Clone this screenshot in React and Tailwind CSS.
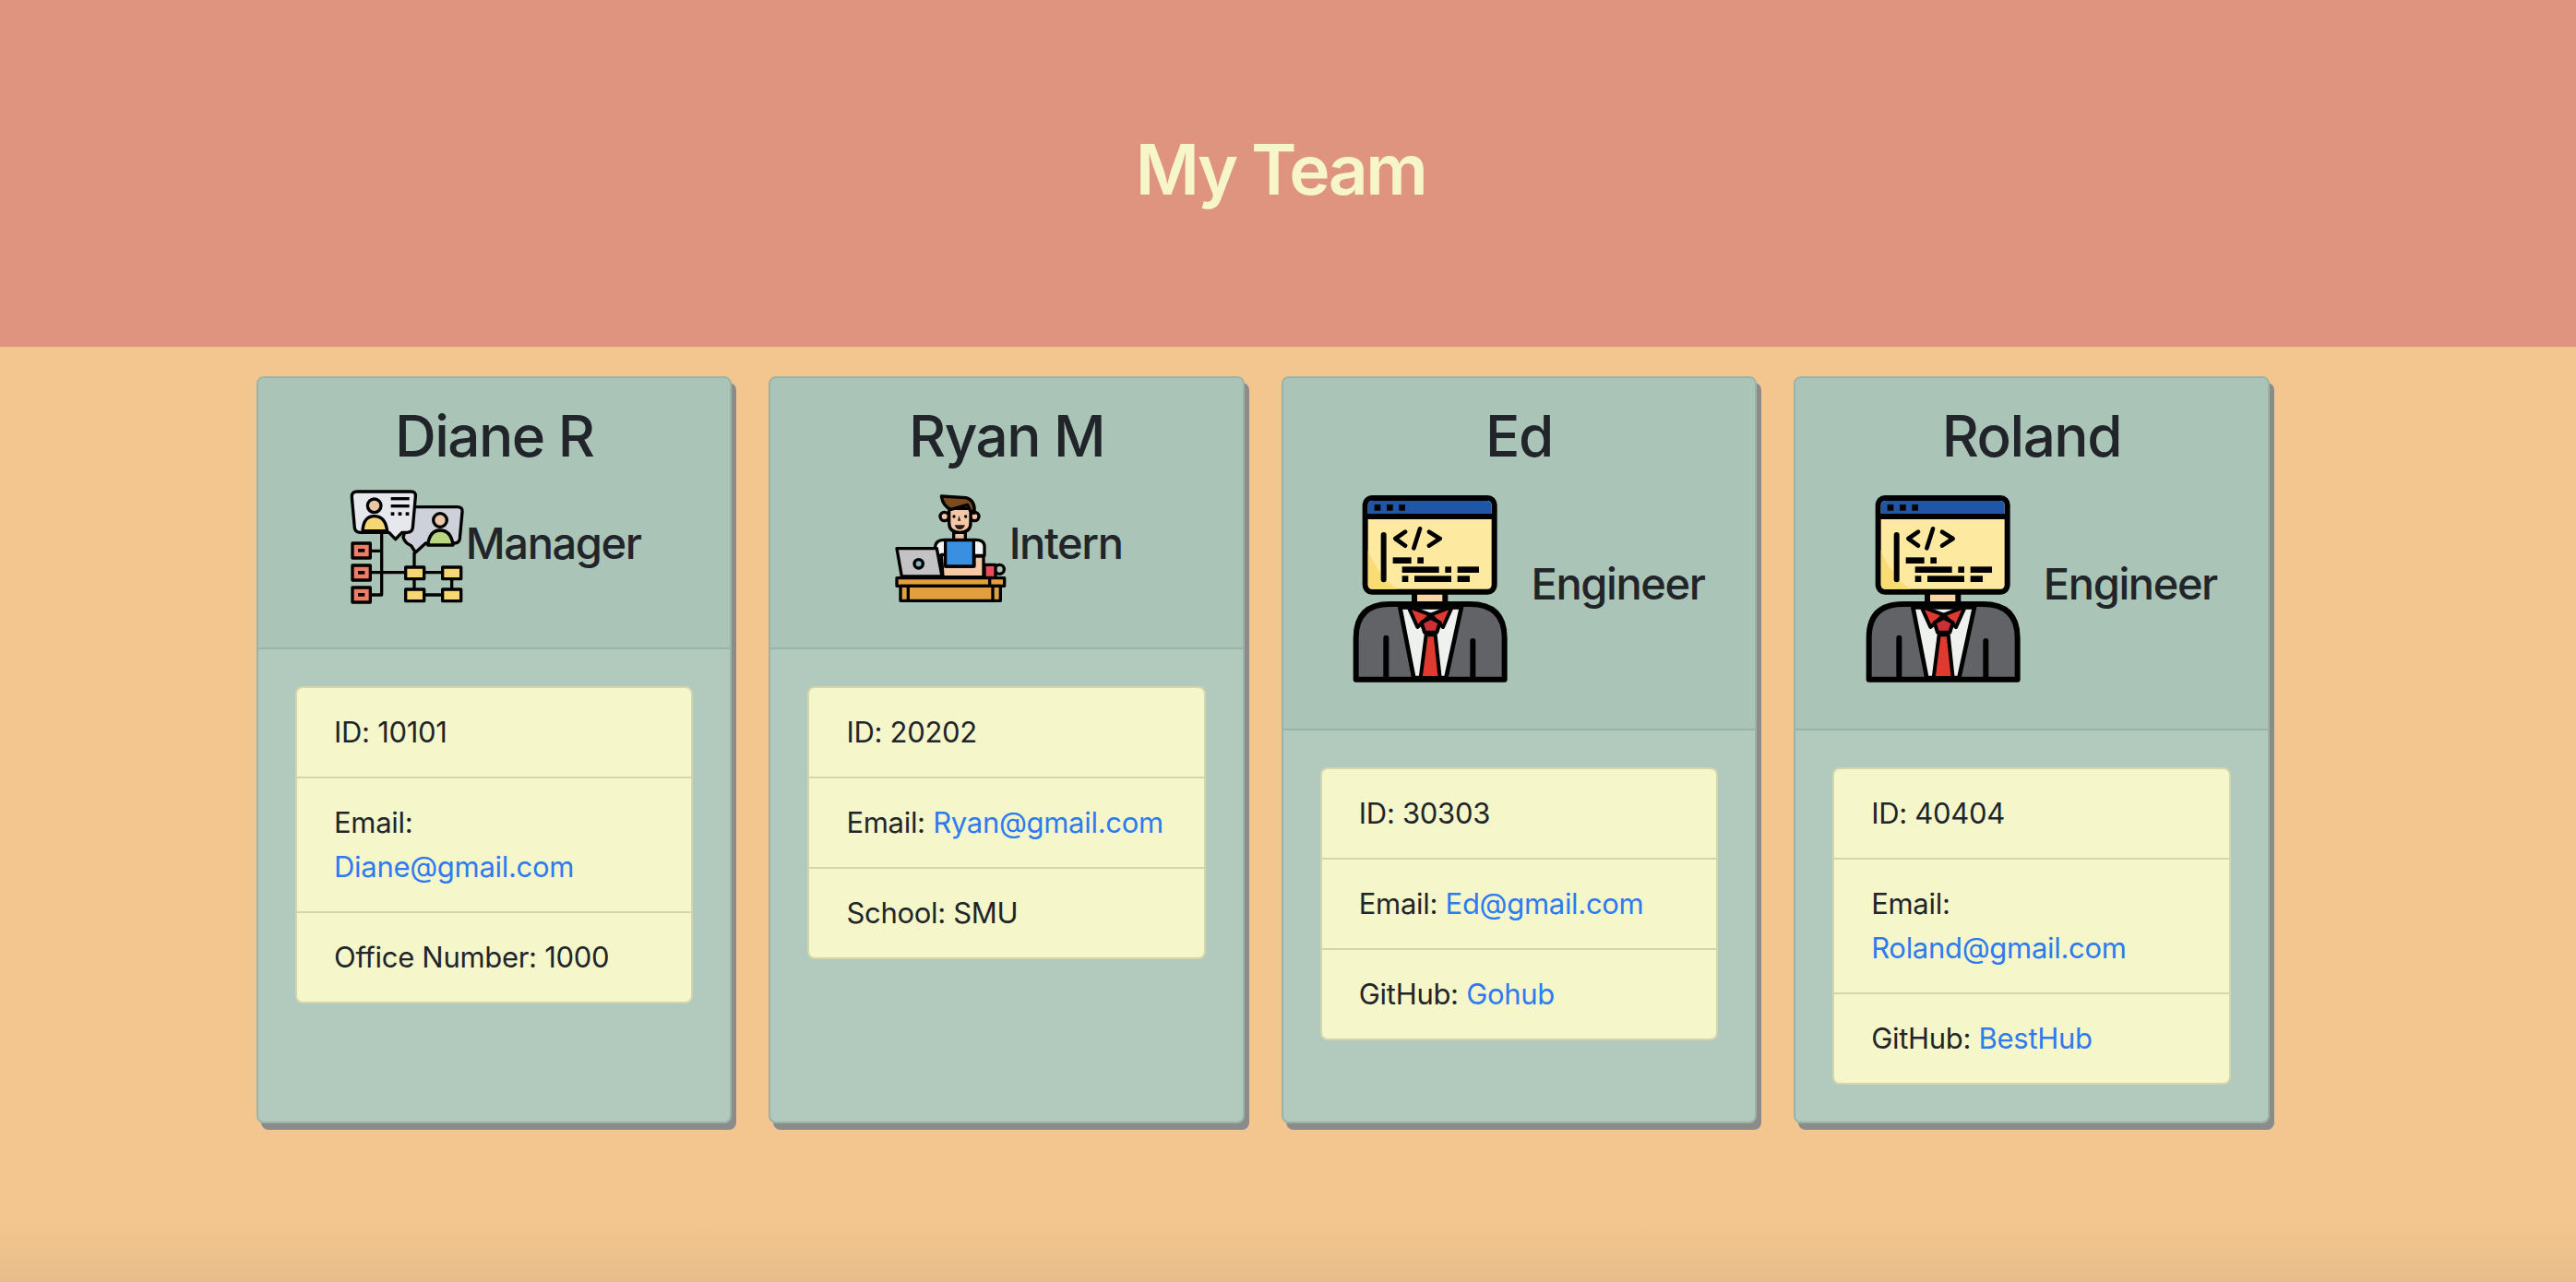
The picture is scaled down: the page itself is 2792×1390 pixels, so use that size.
const managerIcon = (
  <svg viewBox="112 24 384 384" className="w-[128px] h-[128px] shrink-0">
    <g stroke="#000" strokeWidth="10" strokeLinejoin="round" fill="none">
      <path d="M222 175V378H190M190 235H222M190 305H300M328 240V360M360 305H420M450 326V360M360 378H420" />
      <path d="M325 92H468Q486 92 484 108L476 195Q474 210 458 210H365L332 240L318 218Q296 208 292 190Z" fill="#cdd1da" />
      <path d="M142 42H318Q334 42 332 58L323 160Q321 175 305 175H288L267 197L246 175H152Q136 175 134 160L125 60Q124 42 142 42Z" fill="#e6e8ee" />
      <circle cx="198" cy="88" r="22" fill="#eac7a5" />
      <path d="M160 170Q163 122 198 122Q234 122 240 170Z" fill="#f7d676" />
      <circle cx="412" cy="135" r="22" fill="#eac7a5" />
      <path d="M372 216Q378 168 412 168Q448 168 454 216Z" fill="#b7d67f" />
      <rect x="127" y="210" width="58" height="48" fill="#ee7d67" />
      <rect x="127" y="282" width="58" height="48" fill="#ee7d67" />
      <rect x="127" y="354" width="58" height="48" fill="#ee7d67" />
      <rect x="300" y="288" width="60" height="38" fill="#f7d676" />
      <rect x="420" y="288" width="60" height="38" fill="#f7d676" />
      <rect x="300" y="360" width="60" height="38" fill="#f7d676" />
      <rect x="420" y="360" width="60" height="38" fill="#f7d676" />
    </g>
    <g fill="#000">
      <rect x="252" y="60" width="60" height="10" />
      <rect x="252" y="84" width="60" height="10" />
      <rect x="252" y="109" width="11" height="11" />
      <rect x="276" y="109" width="11" height="11" />
      <rect x="300" y="109" width="11" height="11" />
      <rect x="145" y="228" width="22" height="11" />
      <rect x="145" y="300" width="22" height="11" />
      <rect x="145" y="372" width="22" height="11" />
    </g>
  </svg>
);

const internIcon = (
  <svg viewBox="42 9 384 384" className="w-[128px] h-[128px] shrink-0">
    <g stroke="#000" strokeWidth="10" strokeLinejoin="round" fill="none">
      <circle cx="215" cy="108" r="14" fill="#f2c29c" />
      <circle cx="313" cy="108" r="14" fill="#f2c29c" />
      <rect x="245" y="160" width="38" height="28" fill="#f2c29c" />
      <path d="M230 82H300V130Q300 160 265 160Q230 160 230 130Z" fill="#f5c8a5" />
      <path d="M205 42L285 47Q316 55 312 97L298 88L290 70L236 85Q210 75 205 42Z" fill="#7b4a1e" />
      <path d="M185 235V205Q188 184 215 184H315Q345 184 345 205V235Z" fill="#f4f4f4" />
      <path d="M205 232H218V270H312V237H342V305H210Z" fill="#f6c9a6" />
      <rect x="218" y="185" width="92" height="85" fill="#3b8fe0" />
      <path d="M60 212H190L207 303H76Z" fill="#c3c3c5" />
      <circle cx="131" cy="262" r="14" fill="#8ab6bd" />
      <circle cx="394" cy="280" r="15" />
      <rect x="345" y="265" width="36" height="42" fill="#e8505b" />
      <rect x="60" y="308" width="350" height="26" fill="#e2a13f" />
      <rect x="72" y="334" width="325" height="48" fill="#e0a040" />
      <path d="M97 334V382M372 334V382M362 308V334" />
    </g>
    <circle cx="246" cy="108" r="5" fill="#000" />
    <circle cx="284" cy="108" r="5" fill="#000" />
    <path d="M262 105L258 122H268M248 136H282Q278 150 264 150Q252 150 248 136Z" fill="#2a1a12" />
  </svg>
);

const engineerIcon = (
  <svg viewBox="-12 9 642 642" className="w-[214px] h-[216px] shrink-0">
    <g stroke="#000" strokeWidth="18" strokeLinejoin="round" fill="none">
      <rect x="252" y="345" width="100" height="60" fill="#f9d5a7" />
      <path d="M62 635V500Q62 390 172 390H432Q545 390 545 500V635Z" fill="#626366" />
      <path d="M205 400L250 630H355L405 400Z" fill="#eef1ee" strokeWidth="14" />
      <path d="M290 490H320L335 630H272Z" fill="#e0392f" strokeWidth="12" />
      <path d="M232 398L305 425L262 465Z" fill="#e0392f" strokeWidth="12" />
      <path d="M375 398L305 425L345 465Z" fill="#e0392f" strokeWidth="12" />
      <path d="M275 450L305 435L335 450L325 482H285Z" fill="#c93038" strokeWidth="12" />
      <path d="M160 500V630M442 510V630" strokeLinecap="round" />
      <rect x="92" y="45" width="420" height="305" rx="22" fill="#fde99f" />
    </g>
    <path d="M101 215Q130 290 195 341H115Q101 341 101 325Z" fill="#fadc74" />
    <path d="M101 105V70Q101 54 117 54H487Q503 54 503 70V105Z" fill="#1e56a8" />
    <rect x="92" y="96" width="420" height="18" fill="#000" />
    <g fill="#000">
      <rect x="122" y="66" width="20" height="20" />
      <rect x="162" y="66" width="20" height="20" />
      <rect x="202" y="66" width="20" height="20" />
      <rect x="182" y="238" width="60" height="20" />
      <rect x="262" y="238" width="20" height="20" />
      <rect x="212" y="268" width="120" height="20" />
      <rect x="352" y="268" width="20" height="20" />
      <rect x="392" y="268" width="70" height="20" />
      <rect x="212" y="298" width="20" height="20" />
      <rect x="252" y="298" width="120" height="20" />
      <rect x="392" y="298" width="40" height="20" />
    </g>
    <g stroke="#000" strokeLinecap="round" strokeLinejoin="round" fill="none">
      <path d="M152 165V310" strokeWidth="18" />
      <path d="M222 155L190 177L222 200M270 145L250 208M300 155L335 177L300 200" strokeWidth="14" />
    </g>
  </svg>
);

const team = [
  {
    name: "Diane R",
    role: "Manager",
    icon: managerIcon,
    id: "10101",
    email: "Diane@gmail.com",
    extraLabel: "Office Number:",
    extraValue: "1000",
  },
  {
    name: "Ryan M",
    role: "Intern",
    icon: internIcon,
    id: "20202",
    email: "Ryan@gmail.com",
    extraLabel: "School:",
    extraValue: "SMU",
  },
  {
    name: "Ed",
    role: "Engineer",
    icon: engineerIcon,
    id: "30303",
    email: "Ed@gmail.com",
    extraLabel: "GitHub:",
    extraLink: "Gohub",
  },
  {
    name: "Roland",
    role: "Engineer",
    icon: engineerIcon,
    id: "40404",
    email: "Roland@gmail.com",
    extraLabel: "GitHub:",
    extraLink: "BestHub",
  },
];

function Card({ person }) {
  return (
    <div className="w-[515.4px] h-[810px] flex flex-col bg-[#b1cabd] border-2 border-[#9ab3a6] rounded-lg shadow-[5px_7px_0_#8b8b8b] overflow-hidden">
      <div className="bg-[#aac4b7] border-b-2 border-[#9ab3a6] px-10 pt-6 pb-[47px] text-[#212529]">
        <h2 className="text-[62px] leading-[77px] tracking-[-1.5px] mb-4 font-medium text-center">{person.name}</h2>
        <div className="flex justify-center items-center">
          {person.icon}
          <h3 className="text-[47px] leading-[53px] tracking-[-1.4px] font-medium mb-[5px]">{person.role}</h3>
        </div>
      </div>
      <div className="p-10">
        <ul className="bg-[#f5f6ca] border-2 border-[#d3d5ad] rounded-lg text-[31px] leading-[48px] tracking-[-0.3px] text-[#212529] divide-y-2 divide-[#d3d5ad]">
          <li className="px-10 py-6">ID: {person.id}</li>
          <li className="px-10 py-6">
            Email: <a className="text-[#2d7bf0]">{person.email}</a>
          </li>
          <li className="px-10 py-6">
            {person.extraLabel} {person.extraValue}
            {person.extraLink && <a className="text-[#2d7bf0]">{person.extraLink}</a>}
          </li>
        </ul>
      </div>
    </div>
  );
}

export default function App() {
  return (
    <div className="h-[1390px] overflow-hidden bg-[linear-gradient(to_bottom,#f4c68f_95%,#e8bd8a_100%)] font-['Inter',sans-serif]">
      <header className="h-[376px] bg-[#df9480] flex items-center justify-center pr-4 pb-2">
        <h1 className="text-[75px] leading-[96px] tracking-[-2.5px] font-semibold text-[#f6f6ca]">My Team</h1>
      </header>
      <main className="flex gap-10 pl-[278px] pt-[32px]">
        {team.map((person) => (
          <Card key={person.name} person={person} />
        ))}
      </main>
    </div>
  );
}
